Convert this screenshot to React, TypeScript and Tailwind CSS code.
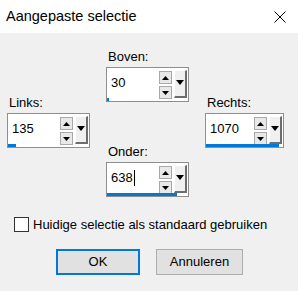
function SpinBox({
  value,
  width,
  bar,
  cursor,
}: {
  value: string;
  width: string;
  bar: number;
  cursor?: boolean;
}) {
  return (
    <div className={`relative ${width} h-[35px] bg-white border border-[#8f8f8f] flex items-start`}>
      <div className="flex-1 h-[30px] flex items-center pl-[4px] text-[13px] text-black">
        {value}
        {cursor && <span className="inline-block w-px h-[16px] bg-black ml-px" />}
      </div>
      {/* spin buttons */}
      <div className="flex flex-col gap-[2px] mt-[3px] mr-[2px]">
        <div className="w-[13px] h-[13px] bg-[#e8e8e8] border border-[#a9a9a9] flex items-center justify-center">
          <svg width="7" height="4" viewBox="0 0 7 4">
            <path d="M0 4 L3.5 0 L7 4 Z" fill="#000" />
          </svg>
        </div>
        <div className="w-[13px] h-[13px] bg-[#e8e8e8] border border-[#a9a9a9] flex items-center justify-center">
          <svg width="7" height="4" viewBox="0 0 7 4">
            <path d="M0 0 L3.5 4 L7 0 Z" fill="#000" />
          </svg>
        </div>
      </div>
      {/* dropdown */}
      <div className="w-[13px] h-[28px] mt-[2px] mr-[1px] bg-[#f0f0f0] border-t border-l border-t-white border-l-white border-r-2 border-b-2 border-r-[#6d6d6d] border-b-[#6d6d6d] flex justify-center pt-[9px]">
        <svg width="8" height="5" viewBox="0 0 8 5">
          <path d="M0 0 L4 5 L8 0 Z" fill="#000" />
        </svg>
      </div>
      <div className="absolute left-0 bottom-0 h-[3px] bg-[#0078d7]" style={{ width: bar }} />
    </div>
  );
}

export default function App() {
  return (
    <div className="w-[298px] h-[291px] bg-[#f0f0f0] flex flex-col font-['Liberation_Sans',Arial,sans-serif] text-black">
      {/* title bar */}
      <div className="h-[33px] bg-white flex items-center justify-between pl-[6px] pr-[12px]">
        <span className="text-[14.5px]">Aangepaste selectie</span>
        <svg width="12" height="12" viewBox="0 0 12 12">
          <path d="M0.5 0.5 L11.5 11.5 M11.5 0.5 L0.5 11.5" stroke="#000" strokeWidth="1" />
        </svg>
      </div>

      {/* fields */}
      <div className="flex">
        <div className="ml-[7px] w-[83px] pt-[62px] flex flex-col">
          <div className="h-[18px] text-[13px] leading-[16px] pl-[2px]">Links:</div>
          <SpinBox value="135" width="w-[83px]" bar={8} />
        </div>
        <div className="ml-[16px] w-[83px] pt-[16px] flex flex-col">
          <div className="h-[18px] text-[13px] leading-[16px] pl-[2px]">Boven:</div>
          <SpinBox value="30" width="w-[83px]" bar={2} />
          <div className="h-[18px] mt-[42px] text-[13px] leading-[16px] pl-[2px]">Onder:</div>
          <SpinBox value="638" width="w-[83px]" bar={70} cursor />
        </div>
        <div className="ml-[16px] w-[79px] pt-[62px] flex flex-col">
          <div className="h-[18px] text-[13px] leading-[16px] pl-[2px]">Rechts:</div>
          <SpinBox value="1070" width="w-[79px]" bar={73} />
        </div>
      </div>

      {/* checkbox */}
      <div className="flex items-center mt-[20px] ml-[14px]">
        <div className="w-[15px] h-[15px] bg-white border border-[#333333]" />
        <span className="ml-[4px] text-[13px] leading-[15px]">Huidige selectie als standaard gebruiken</span>
      </div>

      {/* buttons */}
      <div className="flex mt-[17px] ml-[56px] gap-[16px]">
        <button className="w-[84px] h-[26px] bg-[#e1e1e1] border-2 border-[#0078d7] text-[13px] flex items-center justify-center">
          OK
        </button>
        <button className="w-[87px] h-[26px] bg-[#e1e1e1] border border-[#adadad] text-[13px] flex items-center justify-center">
          Annuleren
        </button>
      </div>
    </div>
  );
}
